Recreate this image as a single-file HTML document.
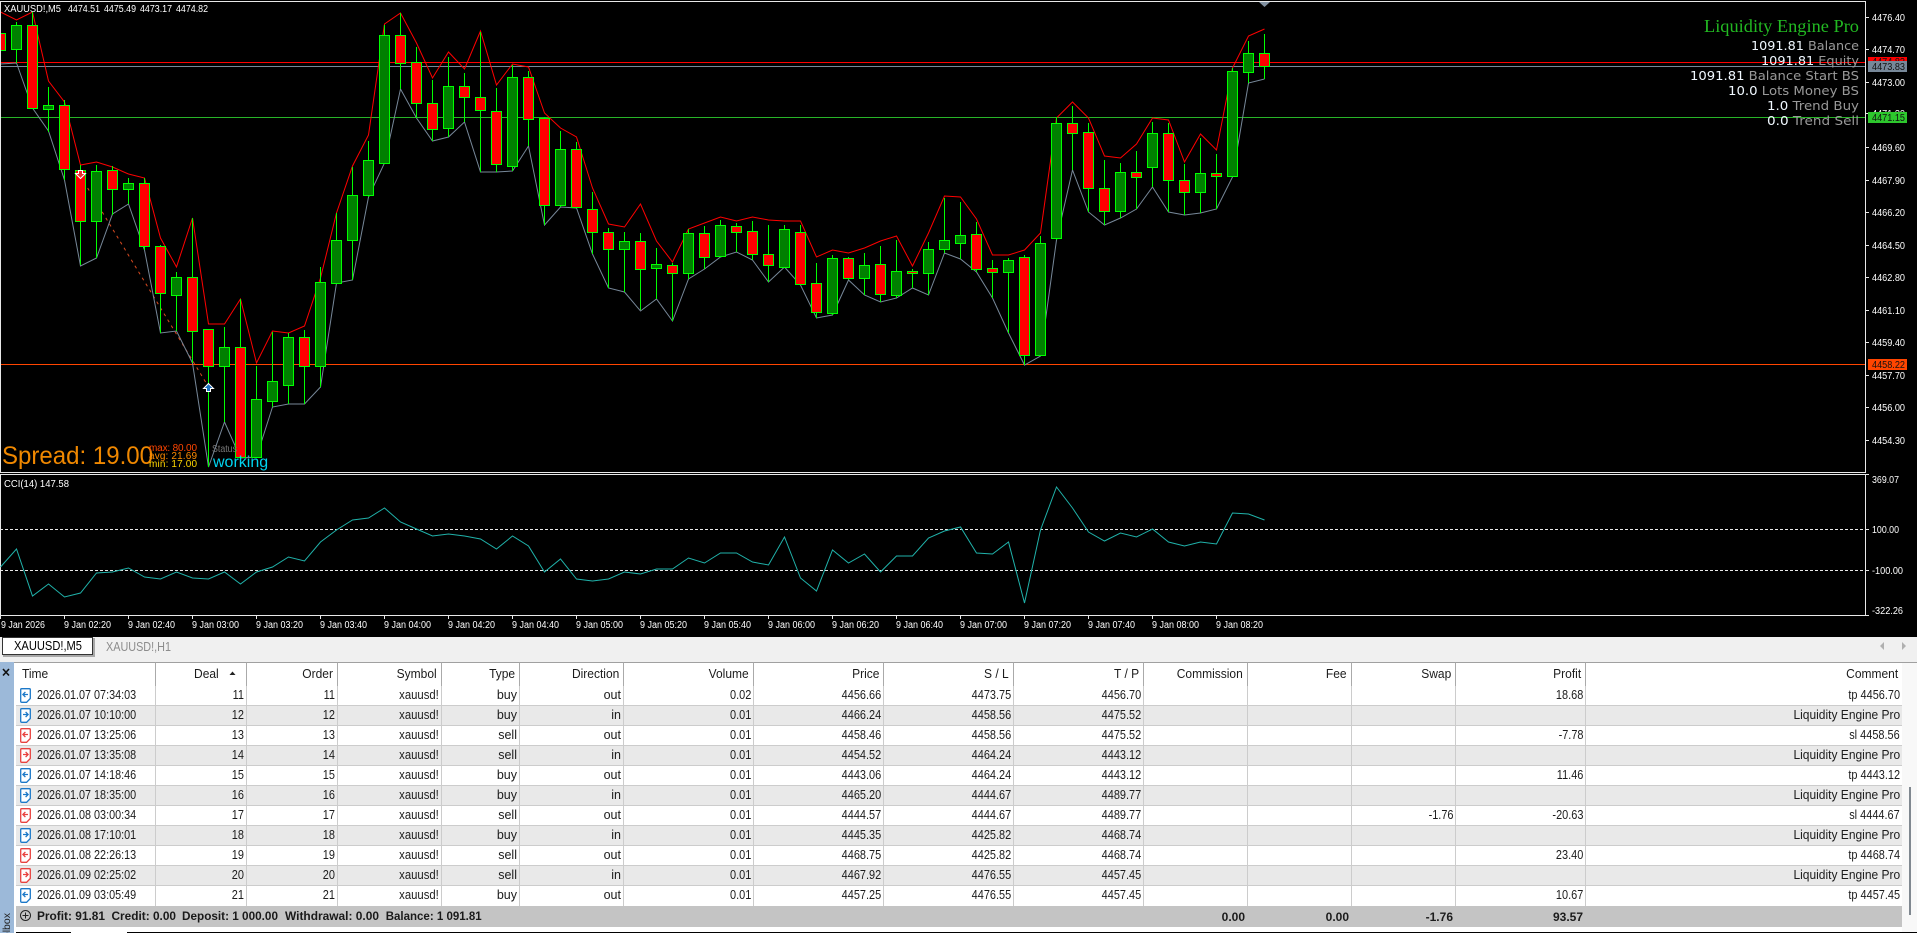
<!DOCTYPE html>
<html>
<head>
<meta charset="utf-8">
<title>XAUUSD!,M5</title>
<style>
html,body{margin:0;padding:0;background:#000;width:1917px;height:933px;overflow:hidden}
svg{position:absolute;left:0;top:0;display:block}
text{font-family:"Liberation Sans",sans-serif}
.ax{font-size:10px;fill:#fff}
.lb{font-size:10px;fill:#111}
.info{font-family:"DejaVu Sans",sans-serif;font-size:12px;fill:#999}
.info tspan{fill:#f0f8ff}
#tb{position:absolute;left:16px;top:662px;width:1886px;border-collapse:separate;border-spacing:0;table-layout:fixed;font:12.5px "Liberation Sans",sans-serif;color:#1c1c1c}
#tb th{height:24px;box-sizing:border-box;border-top:1px solid #a0a0a0;border-right:1px solid #aaa;text-align:right;padding:0 4px 2px 0;font-weight:normal;background:#fff}
#tb th i{display:inline-block;font-style:normal;transform:scaleX(.96);transform-origin:100% 50%}
#tb th:first-child{text-align:left;padding-left:6px}
#tb th:first-child i{transform-origin:0 50%}
#tb td{height:20px;box-sizing:border-box;border-bottom:1px solid #ccc;border-right:1px solid #ccc;text-align:right;padding:0 2px 2px 0;white-space:nowrap;overflow:visible;background:#fff}
#tb tr:nth-child(odd) td{background:#e9e9e9}
#tb tr.h td{background:#fff}
#tb td:first-child{text-align:left;padding-left:21px}
#tb td:last-child,#tb th:last-child{border-right:0}
#tb td i{display:inline-block;font-style:normal;transform:scaleX(.875);transform-origin:100% 50%}
#tb td:first-child i{transform:scaleX(.864);transform-origin:0 50%}
#tb td i.s{transform:scaleX(.905)}
#tb td i.l{transform:scaleX(.96)}
#tb tr.sum td{height:21px;background:#c4c4c4;border:0;font-weight:bold;font-size:12px;padding-bottom:0}
</style>
</head>
<body>
<svg width="1917" height="933" viewBox="0 0 1917 933">
<rect width="1917" height="933" fill="#000"/>
<!-- horizontal price lines -->
<g shape-rendering="crispEdges" fill="none">
<path d="M0 62.5H1865" stroke="#f00"/>
<path d="M0 66.5H1865" stroke="#778899"/>
<path d="M0 117.5H1865" stroke="#28b428"/>
<path d="M0 364.5H1865" stroke="#ff4500"/>
</g>
<!-- trade line -->
<path d="M84 182L208 386" stroke="#d84a20" stroke-width="1" stroke-dasharray="3 4" fill="none"/>
<!-- envelopes -->
<polyline fill="none" stroke="#778899" stroke-width="1" points="0.5,64 16.5,63 32.5,108 48.5,131 64.5,180 80.5,266 96.5,258 112.5,214 128.5,204 144.5,250 160.5,333 176.5,331 192.5,363 208.5,467 224.5,422 240.5,458 256.5,457 272.5,407 288.5,404 304.5,404 320.5,387 336.5,283 352.5,280 368.5,197 384.5,163 400.5,89 416.5,118 432.5,141 448.5,137 464.5,122 480.5,172 496.5,172 512.5,171 528.5,146 544.5,225 560.5,207 576.5,208 592.5,254 608.5,288 624.5,292 640.5,311 656.5,299 672.5,321 688.5,279 704.5,269 720.5,257 736.5,252 752.5,260 768.5,282 784.5,267 800.5,285 816.5,318 832.5,315 848.5,280 864.5,295 880.5,302 896.5,298 912.5,288 928.5,295 944.5,253 960.5,259 976.5,272 992.5,298 1008.5,333 1024.5,365 1040.5,356 1056.5,240 1072.5,170 1088.5,212 1104.5,225 1120.5,218 1136.5,209 1152.5,187 1168.5,212 1184.5,215 1200.5,213 1216.5,209 1232.5,177 1248.5,83 1264.5,79"/>
<polyline fill="none" stroke="#f00" stroke-width="1" points="0.5,12 16.5,20 32.5,12 48.5,81 64.5,102 80.5,165 96.5,162 112.5,167 128.5,174 144.5,178 160.5,238 176.5,267 192.5,218 208.5,324 224.5,324 240.5,299 256.5,363 272.5,331 288.5,333 304.5,326 320.5,278 336.5,213 352.5,166 368.5,135 384.5,24 400.5,13 416.5,43 432.5,78 448.5,52 464.5,69 480.5,31 496.5,85 512.5,64 528.5,67 544.5,113 560.5,128 576.5,137 592.5,188 608.5,224 624.5,227 640.5,204 656.5,241 672.5,262 688.5,229 704.5,223 720.5,217 736.5,221 752.5,217 768.5,220 784.5,221 800.5,221 816.5,257 832.5,250 848.5,253 864.5,248 880.5,241 896.5,236 912.5,266 928.5,233 944.5,196 960.5,197 976.5,219 992.5,255 1008.5,255 1024.5,250 1040.5,233 1056.5,118 1072.5,102 1088.5,118 1104.5,156 1120.5,158 1136.5,144 1152.5,118 1168.5,120 1184.5,162 1200.5,134 1216.5,150 1232.5,68 1248.5,36 1264.5,29"/>
<!-- wicks -->
<path shape-rendering="crispEdges" fill="none" stroke="#0f0" d="M.5 12V33M16.5 22V63M32.5 12V108M48.5 87V132M64.5 100V180M80.5 165V265M96.5 165V258M112.5 166V215M128.5 178V204M144.5 178V250M160.5 245V333M176.5 272V331M192.5 218V363M208.5 329V467M224.5 327V422M240.5 299V458M256.5 366V457M272.5 332V407M288.5 333V404M304.5 330V404M320.5 267V387M336.5 213V283M352.5 167V280M368.5 141V197M384.5 25V163M400.5 13V89M416.5 47V118M432.5 80V141M448.5 57V137M464.5 73V122M480.5 32V172M496.5 88V172M512.5 65V171M528.5 71V146M544.5 117V225M560.5 131V207M576.5 142V208M592.5 192V254M608.5 228V288M624.5 232V292M640.5 233V310M656.5 248V299M672.5 263V321M688.5 229V279M704.5 226V269M720.5 220V257M736.5 223V252M752.5 221V260M768.5 225V282M784.5 225V267M800.5 225V285M816.5 263V318M832.5 255V315M848.5 257V280M864.5 253V295M880.5 246V302M896.5 240V298M912.5 269V288M928.5 242V295M944.5 198V253M960.5 202V259M976.5 222V272M992.5 260V298M1008.5 258V333M1024.5 255V365M1040.5 236V356M1056.5 117V240M1072.5 106V170M1088.5 123V212M1104.5 160V225M1120.5 163V218M1136.5 151V209M1152.5 122V187M1168.5 123V212M1184.5 164V215M1200.5 138V213M1216.5 154V209M1232.5 68V177M1248.5 41V83M1264.5 34V79"/>
<!-- bull bodies -->
<path shape-rendering="crispEdges" fill="#008000" stroke="#0f0" d="M11.5 25.5h10v24h-10zM43.5 105.5h10v4h-10zM91.5 171.5h10v50h-10zM123.5 183.5h10v6h-10zM171.5 277.5h10v18h-10zM219.5 347.5h10v19h-10zM251.5 399.5h10v58h-10zM267.5 381.5h10v20h-10zM283.5 337.5h10v48h-10zM315.5 282.5h10v84h-10zM331.5 240.5h10v43h-10zM347.5 195.5h10v45h-10zM363.5 160.5h10v35h-10zM379.5 35.5h10v128h-10zM443.5 86.5h10v42h-10zM507.5 77.5h10v89h-10zM555.5 149.5h10v56h-10zM619.5 241.5h10v8h-10zM651.5 264.5h10v4h-10zM683.5 233.5h10v40h-10zM715.5 225.5h10v31h-10zM779.5 229.5h10v38h-10zM827.5 258.5h10v55h-10zM859.5 265.5h10v13h-10zM891.5 271.5h10v24h-10zM923.5 249.5h10v24h-10zM939.5 240.5h10v9h-10zM955.5 235.5h10v8h-10zM1003.5 260.5h10v12h-10zM1035.5 243.5h10v112h-10zM1051.5 123.5h10v115h-10zM1115.5 172.5h10v39h-10zM1147.5 133.5h10v34h-10zM1195.5 173.5h10v19h-10zM1227.5 71.5h10v105h-10zM1243.5 53.5h10v19h-10z"/>
<!-- bear bodies -->
<path shape-rendering="crispEdges" fill="#f00" stroke="#0f0" d="M-4.5 33.5h10v17h-10zM27.5 25.5h10v83h-10zM59.5 105.5h10v64h-10zM75.5 170.5h10v51h-10zM107.5 170.5h10v19h-10zM139.5 183.5h10v63h-10zM155.5 246.5h10v47h-10zM187.5 277.5h10v54h-10zM203.5 329.5h10v37h-10zM235.5 347.5h10v110h-10zM299.5 337.5h10v29h-10zM395.5 35.5h10v28h-10zM411.5 62.5h10v41h-10zM427.5 103.5h10v26h-10zM459.5 86.5h10v11h-10zM475.5 97.5h10v13h-10zM491.5 111.5h10v53h-10zM523.5 77.5h10v42h-10zM539.5 118.5h10v87h-10zM571.5 149.5h10v58h-10zM587.5 209.5h10v23h-10zM603.5 232.5h10v17h-10zM635.5 241.5h10v28h-10zM667.5 265.5h10v8h-10zM699.5 233.5h10v24h-10zM731.5 226.5h10v6h-10zM747.5 231.5h10v23h-10zM763.5 254.5h10v11h-10zM795.5 232.5h10v52h-10zM811.5 283.5h10v29h-10zM843.5 258.5h10v20h-10zM875.5 264.5h10v30h-10zM907.5 271.5h10v2h-10zM971.5 234.5h10v35h-10zM987.5 268.5h10v4h-10zM1019.5 257.5h10v98h-10zM1067.5 123.5h10v10h-10zM1083.5 132.5h10v56h-10zM1099.5 188.5h10v23h-10zM1131.5 172.5h10v5h-10zM1163.5 133.5h10v47h-10zM1179.5 180.5h10v12h-10zM1211.5 173.5h10v3h-10zM1259.5 53.5h10v13h-10z"/>
<!-- markers -->
<path d="M78.5 170.5h4v3h3l-5 5-5-5h3z" fill="#e83030" stroke="#fff"/>
<path d="M208.5 383.5l5 5h-3v3h-4v-3h-3z" fill="#1a6fc0" stroke="#fff"/>
<!-- frame -->
<g shape-rendering="crispEdges" fill="none" stroke="#e8e8e8">
<path d="M0 1.5H1865.5V472.5H0"/>
<path d="M.5 1V472"/>
<path d="M0 474.5H1865.5V615.5H0"/>
<path d="M.5 474V615"/>
<path d="M1865 17.5h4M1865 49.5h4M1865 82.5h4M1865 113.5h4M1865 147.5h4M1865 180.5h4M1865 212.5h4M1865 245.5h4M1865 277.5h4M1865 310.5h4M1865 342.5h4M1865 375.5h4M1865 407.5h4M1865 440.5h4"/>
<path d="M1865 474.5h4M1865 529.5h4M1865 570.5h4M1865 615.5h4"/>
<path d="M64.5 615v4M128.5 615v4M192.5 615v4M256.5 615v4M320.5 615v4M384.5 615v4M448.5 615v4M512.5 615v4M576.5 615v4M640.5 615v4M704.5 615v4M768.5 615v4M832.5 615v4M896.5 615v4M960.5 615v4M1024.5 615v4M1088.5 615v4M1152.5 615v4M1216.5 615v4M.5 615v4"/>
<path d="M0 529.5H1865M0 570.5H1865" stroke-dasharray="3 2"/>
</g>
<!-- top triangle -->
<polygon points="1259,2 1270,2 1264.5,7" fill="#8090a0"/>
<!-- CCI -->
<polyline fill="none" stroke="#20b2aa" stroke-width="1" points="0.5,567 16.5,549 32.5,596 48.5,584 64.5,597 80.5,593 96.5,573 112.5,572 128.5,568 144.5,577 160.5,579 176.5,572 192.5,578 208.5,579 224.5,572 240.5,584 256.5,572 272.5,567 288.5,557 304.5,561 320.5,542 336.5,530 352.5,520 368.5,518 384.5,508 400.5,522 416.5,529 432.5,536 448.5,534 464.5,536 480.5,539 496.5,549 512.5,536 528.5,546 544.5,572 560.5,559 576.5,579 592.5,581 608.5,579 624.5,572 640.5,574 656.5,569 672.5,569 688.5,558 704.5,563 720.5,553 736.5,553 752.5,562 768.5,565 784.5,537 800.5,578 816.5,591 832.5,550 848.5,563 864.5,554 880.5,572 896.5,556 912.5,556 928.5,538 944.5,531 960.5,527 976.5,553 992.5,554 1008.5,542 1024.5,603 1040.5,530 1056.5,487 1072.5,508 1088.5,532 1104.5,541 1120.5,533 1136.5,537 1152.5,529 1168.5,542 1184.5,546 1200.5,542 1216.5,544 1232.5,513 1248.5,514 1264.5,520"/>
<!-- header text -->
<text class="ax" x="4" y="12" textLength="57" lengthAdjust="spacingAndGlyphs">XAUUSD!,M5</text>
<text class="ax" x="68" y="12" textLength="32" lengthAdjust="spacingAndGlyphs">4474.51</text>
<text class="ax" x="104" y="12" textLength="32" lengthAdjust="spacingAndGlyphs">4475.49</text>
<text class="ax" x="140" y="12" textLength="32" lengthAdjust="spacingAndGlyphs">4473.17</text>
<text class="ax" x="176" y="12" textLength="32" lengthAdjust="spacingAndGlyphs">4474.82</text>
<text class="ax" x="4" y="487" textLength="65" lengthAdjust="spacingAndGlyphs">CCI(14) 147.58</text>
<!-- axis prices -->
<g class="ax">
<text class="ax" x="1872" y="21" textLength="33" lengthAdjust="spacingAndGlyphs">4476.40</text>
<text class="ax" x="1872" y="53" textLength="33" lengthAdjust="spacingAndGlyphs">4474.70</text>
<text class="ax" x="1872" y="86" textLength="33" lengthAdjust="spacingAndGlyphs">4473.00</text>
<text class="ax" x="1872" y="117" textLength="33" lengthAdjust="spacingAndGlyphs">4471.30</text>
<text class="ax" x="1872" y="151" textLength="33" lengthAdjust="spacingAndGlyphs">4469.60</text>
<text class="ax" x="1872" y="184" textLength="33" lengthAdjust="spacingAndGlyphs">4467.90</text>
<text class="ax" x="1872" y="216" textLength="33" lengthAdjust="spacingAndGlyphs">4466.20</text>
<text class="ax" x="1872" y="249" textLength="33" lengthAdjust="spacingAndGlyphs">4464.50</text>
<text class="ax" x="1872" y="281" textLength="33" lengthAdjust="spacingAndGlyphs">4462.80</text>
<text class="ax" x="1872" y="314" textLength="33" lengthAdjust="spacingAndGlyphs">4461.10</text>
<text class="ax" x="1872" y="346" textLength="33" lengthAdjust="spacingAndGlyphs">4459.40</text>
<text class="ax" x="1872" y="379" textLength="33" lengthAdjust="spacingAndGlyphs">4457.70</text>
<text class="ax" x="1872" y="411" textLength="33" lengthAdjust="spacingAndGlyphs">4456.00</text>
<text class="ax" x="1872" y="444" textLength="33" lengthAdjust="spacingAndGlyphs">4454.30</text>
<text class="ax" x="1872" y="483" textLength="27" lengthAdjust="spacingAndGlyphs">369.07</text>
<text class="ax" x="1872" y="533" textLength="27" lengthAdjust="spacingAndGlyphs">100.00</text>
<text class="ax" x="1872" y="574" textLength="31" lengthAdjust="spacingAndGlyphs">-100.00</text>
<text class="ax" x="1872" y="614" textLength="31" lengthAdjust="spacingAndGlyphs">-322.26</text>
</g>
<!-- price labels -->
<g shape-rendering="crispEdges">
<rect x="1868" y="57" width="39" height="8" fill="#f00"/>
</g>
<text class="lb" x="1872" y="65" textLength="33" lengthAdjust="spacingAndGlyphs">4474.82</text>
<g shape-rendering="crispEdges">
<rect x="1868" y="61" width="39" height="11" fill="#778899"/>
<rect x="1868" y="112" width="39" height="11" fill="#2dc72d"/>
<rect x="1868" y="359" width="39" height="11" fill="#ff4500"/>
</g>
<text class="lb" x="1872" y="70" textLength="33" lengthAdjust="spacingAndGlyphs">4473.83</text>
<text class="lb" x="1872" y="121" textLength="33" lengthAdjust="spacingAndGlyphs">4471.15</text>
<text class="lb" x="1872" y="368" textLength="33" lengthAdjust="spacingAndGlyphs">4458.22</text>
<!-- info panel -->
<text x="1859" y="32" text-anchor="end" style="font-family:'Liberation Serif',serif;font-size:18px;fill:#22b922" textLength="155" lengthAdjust="spacingAndGlyphs">Liquidity Engine Pro</text>
<text class="info" x="1859" y="50" text-anchor="end" textLength="108" lengthAdjust="spacingAndGlyphs"><tspan>1091.81</tspan> Balance</text>
<text class="info" x="1859" y="65" text-anchor="end" textLength="98" lengthAdjust="spacingAndGlyphs"><tspan>1091.81</tspan> Equity</text>
<text class="info" x="1859" y="80" text-anchor="end" textLength="169" lengthAdjust="spacingAndGlyphs"><tspan>1091.81</tspan> Balance Start BS</text>
<text class="info" x="1859" y="95" text-anchor="end" textLength="131" lengthAdjust="spacingAndGlyphs"><tspan>10.0</tspan> Lots Money BS</text>
<text class="info" x="1859" y="110" text-anchor="end" textLength="92" lengthAdjust="spacingAndGlyphs"><tspan>1.0</tspan> Trend Buy</text>
<text class="info" x="1859" y="125" text-anchor="end" textLength="92" lengthAdjust="spacingAndGlyphs"><tspan>0.0</tspan> Trend Sell</text>
<!-- spread -->
<text x="2" y="464" style="font-size:25px;fill:#f08800" textLength="151" lengthAdjust="spacingAndGlyphs">Spread: 19.00</text>
<text x="149" y="451" style="font-size:10px;fill:#ff4500" textLength="48" lengthAdjust="spacing">max:  80.00</text>
<text x="149" y="459" style="font-size:10px;fill:#ff8c00" textLength="48" lengthAdjust="spacing">avg:  21.69</text>
<text x="149" y="467" style="font-size:10px;fill:#ffd700" textLength="48" lengthAdjust="spacing">min:  17.00</text>
<text x="212" y="452" style="font-size:10px;fill:#777" textLength="25" lengthAdjust="spacingAndGlyphs">Status</text>
<text x="213" y="467" style="font-size:16px;fill:#00d4f0">working</text>
<!-- time axis -->
<g>
<text class="ax" x="1" y="628" textLength="44" lengthAdjust="spacingAndGlyphs">9 Jan 2026</text>
<text class="ax" x="64" y="628" textLength="47" lengthAdjust="spacingAndGlyphs">9 Jan 02:20</text>
<text class="ax" x="128" y="628" textLength="47" lengthAdjust="spacingAndGlyphs">9 Jan 02:40</text>
<text class="ax" x="192" y="628" textLength="47" lengthAdjust="spacingAndGlyphs">9 Jan 03:00</text>
<text class="ax" x="256" y="628" textLength="47" lengthAdjust="spacingAndGlyphs">9 Jan 03:20</text>
<text class="ax" x="320" y="628" textLength="47" lengthAdjust="spacingAndGlyphs">9 Jan 03:40</text>
<text class="ax" x="384" y="628" textLength="47" lengthAdjust="spacingAndGlyphs">9 Jan 04:00</text>
<text class="ax" x="448" y="628" textLength="47" lengthAdjust="spacingAndGlyphs">9 Jan 04:20</text>
<text class="ax" x="512" y="628" textLength="47" lengthAdjust="spacingAndGlyphs">9 Jan 04:40</text>
<text class="ax" x="576" y="628" textLength="47" lengthAdjust="spacingAndGlyphs">9 Jan 05:00</text>
<text class="ax" x="640" y="628" textLength="47" lengthAdjust="spacingAndGlyphs">9 Jan 05:20</text>
<text class="ax" x="704" y="628" textLength="47" lengthAdjust="spacingAndGlyphs">9 Jan 05:40</text>
<text class="ax" x="768" y="628" textLength="47" lengthAdjust="spacingAndGlyphs">9 Jan 06:00</text>
<text class="ax" x="832" y="628" textLength="47" lengthAdjust="spacingAndGlyphs">9 Jan 06:20</text>
<text class="ax" x="896" y="628" textLength="47" lengthAdjust="spacingAndGlyphs">9 Jan 06:40</text>
<text class="ax" x="960" y="628" textLength="47" lengthAdjust="spacingAndGlyphs">9 Jan 07:00</text>
<text class="ax" x="1024" y="628" textLength="47" lengthAdjust="spacingAndGlyphs">9 Jan 07:20</text>
<text class="ax" x="1088" y="628" textLength="47" lengthAdjust="spacingAndGlyphs">9 Jan 07:40</text>
<text class="ax" x="1152" y="628" textLength="47" lengthAdjust="spacingAndGlyphs">9 Jan 08:00</text>
<text class="ax" x="1216" y="628" textLength="47" lengthAdjust="spacingAndGlyphs">9 Jan 08:20</text>
</g>
<!-- tab bar -->
<g shape-rendering="crispEdges">
<rect x="0" y="637" width="1917" height="25" fill="#f0f0f0"/>
<rect x="3" y="638" width="92" height="19" fill="#a8a8a8"/>
<rect x="2.5" y="637.5" width="90" height="17" fill="#fff" stroke="#333"/>
</g>
<text x="14" y="650" style="font-size:12.5px;fill:#000" textLength="68" lengthAdjust="spacingAndGlyphs">XAUUSD!,M5</text>
<text x="106" y="651" style="font-size:12.5px;fill:#8c8c8c" textLength="65" lengthAdjust="spacingAndGlyphs">XAUUSD!,H1</text>
<polygon points="1884,642 1884,650 1880,646" fill="#b0b0b0"/>
<polygon points="1902,642 1902,650 1906,646" fill="#b0b0b0"/>
<!-- bottom panel background -->
<g shape-rendering="crispEdges">
<rect x="0" y="662" width="1917" height="271" fill="#fff"/>
<rect x="1902" y="662" width="15" height="271" fill="#f8f8f8"/>
<rect x="0" y="662" width="14" height="271" fill="#9cb9d9"/>
<rect x="14" y="662" width="1903" height="1" fill="#a0a0a0"/>
<rect x="16" y="932" width="55" height="1" fill="#000"/>
<rect x="127" y="932" width="1790" height="1" fill="#000"/>
</g>
</svg>

<table id="tb">
<colgroup><col style="width:140px"><col style="width:91px"><col style="width:91px"><col style="width:104px"><col style="width:78px"><col style="width:104px"><col style="width:130px"><col style="width:130px"><col style="width:130px"><col style="width:130px"><col style="width:104px"><col style="width:104px"><col style="width:104px"><col style="width:130px"><col style="width:316px"></colgroup>
<tr class="h"><th><i>Time</i></th><th style="padding-right:27px"><i>Deal</i></th><th><i>Order</i></th><th><i>Symbol</i></th><th><i>Type</i></th><th><i>Direction</i></th><th><i>Volume</i></th><th><i>Price</i></th><th><i>S / L</i></th><th><i>T / P</i></th><th><i>Commission</i></th><th><i>Fee</i></th><th><i>Swap</i></th><th><i>Profit</i></th><th><i>Comment</i></th></tr>
<tr><td><i>2026.01.07 07:34:03</i></td><td><i>11</i></td><td><i>11</i></td><td><i class="s">xauusd!</i></td><td>buy</td><td>out</td><td><i>0.02</i></td><td><i>4456.66</i></td><td><i>4473.75</i></td><td><i>4456.70</i></td><td></td><td></td><td></td><td><i>18.68</i></td><td><i>tp 4456.70</i></td></tr>
<tr><td><i>2026.01.07 10:10:00</i></td><td><i>12</i></td><td><i>12</i></td><td><i class="s">xauusd!</i></td><td>buy</td><td>in</td><td><i>0.01</i></td><td><i>4466.24</i></td><td><i>4458.56</i></td><td><i>4475.52</i></td><td></td><td></td><td></td><td></td><td><i class="l">Liquidity Engine Pro</i></td></tr>
<tr><td><i>2026.01.07 13:25:06</i></td><td><i>13</i></td><td><i>13</i></td><td><i class="s">xauusd!</i></td><td>sell</td><td>out</td><td><i>0.01</i></td><td><i>4458.46</i></td><td><i>4458.56</i></td><td><i>4475.52</i></td><td></td><td></td><td></td><td><i>-7.78</i></td><td><i>sl 4458.56</i></td></tr>
<tr><td><i>2026.01.07 13:35:08</i></td><td><i>14</i></td><td><i>14</i></td><td><i class="s">xauusd!</i></td><td>sell</td><td>in</td><td><i>0.01</i></td><td><i>4454.52</i></td><td><i>4464.24</i></td><td><i>4443.12</i></td><td></td><td></td><td></td><td></td><td><i class="l">Liquidity Engine Pro</i></td></tr>
<tr><td><i>2026.01.07 14:18:46</i></td><td><i>15</i></td><td><i>15</i></td><td><i class="s">xauusd!</i></td><td>buy</td><td>out</td><td><i>0.01</i></td><td><i>4443.06</i></td><td><i>4464.24</i></td><td><i>4443.12</i></td><td></td><td></td><td></td><td><i>11.46</i></td><td><i>tp 4443.12</i></td></tr>
<tr><td><i>2026.01.07 18:35:00</i></td><td><i>16</i></td><td><i>16</i></td><td><i class="s">xauusd!</i></td><td>buy</td><td>in</td><td><i>0.01</i></td><td><i>4465.20</i></td><td><i>4444.67</i></td><td><i>4489.77</i></td><td></td><td></td><td></td><td></td><td><i class="l">Liquidity Engine Pro</i></td></tr>
<tr><td><i>2026.01.08 03:00:34</i></td><td><i>17</i></td><td><i>17</i></td><td><i class="s">xauusd!</i></td><td>sell</td><td>out</td><td><i>0.01</i></td><td><i>4444.57</i></td><td><i>4444.67</i></td><td><i>4489.77</i></td><td></td><td></td><td><i>-1.76</i></td><td><i>-20.63</i></td><td><i>sl 4444.67</i></td></tr>
<tr><td><i>2026.01.08 17:10:01</i></td><td><i>18</i></td><td><i>18</i></td><td><i class="s">xauusd!</i></td><td>buy</td><td>in</td><td><i>0.01</i></td><td><i>4445.35</i></td><td><i>4425.82</i></td><td><i>4468.74</i></td><td></td><td></td><td></td><td></td><td><i class="l">Liquidity Engine Pro</i></td></tr>
<tr><td><i>2026.01.08 22:26:13</i></td><td><i>19</i></td><td><i>19</i></td><td><i class="s">xauusd!</i></td><td>sell</td><td>out</td><td><i>0.01</i></td><td><i>4468.75</i></td><td><i>4425.82</i></td><td><i>4468.74</i></td><td></td><td></td><td></td><td><i>23.40</i></td><td><i>tp 4468.74</i></td></tr>
<tr><td><i>2026.01.09 02:25:02</i></td><td><i>20</i></td><td><i>20</i></td><td><i class="s">xauusd!</i></td><td>sell</td><td>in</td><td><i>0.01</i></td><td><i>4467.92</i></td><td><i>4476.55</i></td><td><i>4457.45</i></td><td></td><td></td><td></td><td></td><td><i class="l">Liquidity Engine Pro</i></td></tr>
<tr><td style="border-bottom:0"><i>2026.01.09 03:05:49</i></td><td style="border-bottom:0"><i>21</i></td><td style="border-bottom:0"><i>21</i></td><td style="border-bottom:0"><i class="s">xauusd!</i></td><td style="border-bottom:0">buy</td><td style="border-bottom:0">out</td><td style="border-bottom:0"><i>0.01</i></td><td style="border-bottom:0"><i>4457.25</i></td><td style="border-bottom:0"><i>4476.55</i></td><td style="border-bottom:0"><i>4457.45</i></td><td style="border-bottom:0"></td><td style="border-bottom:0"></td><td style="border-bottom:0"></td><td style="border-bottom:0"><i>10.67</i></td><td style="border-bottom:0"><i>tp 4457.45</i></td></tr>
<tr class="sum"><td colspan="10"></td><td style="padding-right:3px">0.00</td><td style="padding-right:3px">0.00</td><td style="padding-right:3px">-1.76</td><td style="padding-right:3px">93.57</td><td></td></tr>
</table>

<svg width="1917" height="933" viewBox="0 0 1917 933" style="pointer-events:none">
<defs>
<g id="bo" fill="none" stroke="#1b78c8" stroke-width="1.3"><path fill="#fff" d="M.7 1.7Q.7.7 1.7.7H9.3Q10.3.7 10.3 1.7V10.5L6.6 14.3H1.7Q.7 14.3.7 13.3Z"/><path d="M8 6.5H3M5.4 3.9L2.9 6.5L5.4 9.1"/></g>
<g id="bi" fill="none" stroke="#1b78c8" stroke-width="1.3"><path fill="#fff" d="M.7 1.7Q.7.7 1.7.7H9.3Q10.3.7 10.3 1.7V10.5L6.6 14.3H1.7Q.7 14.3.7 13.3Z"/><path d="M3 6.5H8M5.6 3.9L8.1 6.5L5.6 9.1"/></g>
<g id="ro" fill="none" stroke="#e8423f" stroke-width="1.3"><path fill="#fff" d="M.7 1.7Q.7.7 1.7.7H9.3Q10.3.7 10.3 1.7V10.5L6.6 14.3H1.7Q.7 14.3.7 13.3Z"/><path d="M8 6.5H3M5.4 3.9L2.9 6.5L5.4 9.1"/></g>
<g id="ri" fill="none" stroke="#e8423f" stroke-width="1.3"><path fill="#fff" d="M.7 1.7Q.7.7 1.7.7H9.3Q10.3.7 10.3 1.7V10.5L6.6 14.3H1.7Q.7 14.3.7 13.3Z"/><path d="M3 6.5H8M5.6 3.9L8.1 6.5L5.6 9.1"/></g>
</defs>
<use href="#bo" x="20" y="688"/>
<use href="#bi" x="20" y="708"/>
<use href="#ro" x="20" y="728"/>
<use href="#ri" x="20" y="748"/>
<use href="#bo" x="20" y="768"/>
<use href="#bi" x="20" y="788"/>
<use href="#ro" x="20" y="808"/>
<use href="#bi" x="20" y="828"/>
<use href="#ro" x="20" y="848"/>
<use href="#ri" x="20" y="868"/>
<use href="#bo" x="20" y="888"/>
<!-- sort arrow -->
<polygon points="229.5,675 235.5,675 232.5,671.5" fill="#222"/>
<!-- close -->
<path d="M3 669L9 675.5M9 669L3 675.5" stroke="#111" stroke-width="1.6" fill="none"/>
<text transform="translate(10,913) rotate(-90)" text-anchor="end" style="font-size:10.5px;fill:#222">Toolbox</text>
<!-- scrollbar thumb -->
<rect x="1909" y="787" width="2" height="128" fill="#808890" shape-rendering="crispEdges"/>
<!-- summary -->
<circle cx="25.5" cy="915.5" r="5" fill="none" stroke="#222" stroke-width="1"/>
<path d="M25.5 912.5v6M22.5 915.5h6" stroke="#222" stroke-width="1" fill="none"/>
<g style="font-size:12px;font-weight:bold;fill:#1a1a1a">
<text x="37" y="920" textLength="68" lengthAdjust="spacingAndGlyphs">Profit: 91.81</text>
<text x="111.5" y="920" textLength="64.5" lengthAdjust="spacingAndGlyphs">Credit: 0.00</text>
<text x="182" y="920" textLength="96" lengthAdjust="spacingAndGlyphs">Deposit: 1 000.00</text>
<text x="285" y="920" textLength="94" lengthAdjust="spacingAndGlyphs">Withdrawal: 0.00</text>
<text x="385.7" y="920" textLength="96" lengthAdjust="spacingAndGlyphs">Balance: 1 091.81</text>
</g>
</svg>
</body>
</html>
